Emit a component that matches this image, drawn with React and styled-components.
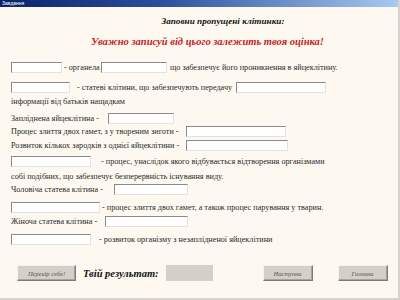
import React from "react";
import styled, { createGlobalStyle } from "styled-components";

const Global = createGlobalStyle`
  html, body { margin: 0; padding: 0; background: #fdf9f0; }
  body { width: 400px; height: 300px; overflow: hidden; }
`;

const Window = styled.div`
  width: 400px;
  height: 300px;
  box-sizing: border-box;
  background: #fdf9f0;
  border-right: 2px solid #d8d4cc;
  border-bottom: 2px solid #d8d4cc;
  display: flex;
  flex-direction: column;
  font-family: "Liberation Serif", "Times New Roman", serif;
  color: #2a2a2a;
`;

const TitleBar = styled.div`
  height: 7px;
  background: linear-gradient(to right, #0a246a 0%, #2a4f9a 40%, #a6caf0 100%);
  color: #fff;
  font-family: "Liberation Sans", Arial, sans-serif;
  font-size: 5px;
  line-height: 7px;
  padding-left: 2px;
  flex: none;
`;

const Body = styled.div`
  display: flex;
  flex-direction: column;
  padding: 0 0 0 11px;
`;

const Heading = styled.div`
  font-weight: bold;
  font-style: italic;
  text-align: center;
  font-size: ${(p) => p.$size}px;
  color: ${(p) => p.$color};
  margin-top: ${(p) => p.$top}px;
  line-height: ${(p) => p.$lh}px;
  padding-left: ${(p) => p.$shift}px;
  white-space: nowrap;
`;

const Row = styled.div`
  display: flex;
  align-items: center;
  height: 12px;
  margin-top: ${(p) => p.$top}px;
  font-size: 8.2px;
  white-space: nowrap;
`;

const Text = styled.span`
  margin-left: ${(p) => p.$ml || 0}px;
`;

const Label = styled.span`
  width: ${(p) => p.$w}px;
  margin-left: ${(p) => p.$ml || 0}px;
  flex: none;
  overflow: visible;
`;

const Field = styled.div`
  box-sizing: border-box;
  height: 11px;
  width: ${(p) => p.$w}px;
  margin-left: ${(p) => p.$ml || 0}px;
  background: #fff;
  border-top: 1px solid #8a8a8a;
  border-left: 1px solid #8a8a8a;
  border-right: 1px solid #e4e2dc;
  border-bottom: 1px solid #e4e2dc;
  flex: none;
`;

const Footer = styled.div`
  display: flex;
  align-items: center;
  margin-top: 20px;
  padding-left: 6px;
  height: 16px;
`;

const Button = styled.div`
  box-sizing: border-box;
  width: ${(p) => p.$w}px;
  height: 16px;
  margin-left: ${(p) => p.$ml || 0}px;
  background: #d4d0c8;
  border-top: 1px solid #f4f2ee;
  border-left: 1px solid #f4f2ee;
  border-right: 1px solid #7e7b76;
  border-bottom: 1px solid #7e7b76;
  box-shadow: inset -1px -1px 0 #a8a49c;
  display: flex;
  align-items: center;
  justify-content: center;
  font-style: italic;
  font-size: 6.5px;
  color: #555;
  flex: none;
`;

const Result = styled.span`
  font-weight: bold;
  font-style: italic;
  font-size: 10.5px;
  margin-left: 7px;
  color: #111;
`;

const ScoreBox = styled.div`
  box-sizing: border-box;
  width: 47px;
  height: 16px;
  margin-left: 7px;
  background: #d4d0c8;
  flex: none;
`;

export default function App() {
  return (
    <>
      <Global />
      <Window>
        <TitleBar>Завдання</TitleBar>
        <Body>
          <Heading $size={9.2} $color="#111" $top={8} $lh={12} $shift={37}>
            Заповни пропущені клітинки:
          </Heading>
          <Heading $size={10.5} $color="#c8201e" $top={8} $lh={14} $shift={6}>
            Уважно записуй від цього залежить твоя оцінка!
          </Heading>
          <Row $top={12}>
            <Field $w={51} />
            <Label $w={37} $ml={2}>- органела</Label>
            <Field $w={66} />
            <Text $ml={3}>що забезпечує його проникнення в яйцеклітину.</Text>
          </Row>
          <Row $top={8}>
            <Field $w={59} />
            <Label $w={159} $ml={7}>- статеві клітини, що забезпечують передачу</Label>
            <Field $w={90} />
          </Row>
          <Row $top={2}>
            <Text>інформації від батьків нащадкам</Text>
          </Row>
          <Row $top={5}>
            <Label $w={97}>Запліднена яйцеклітина -</Label>
            <Field $w={66} />
          </Row>
          <Row $top={1}>
            <Label $w={175}>Процес злиття двох гамет, з у твореним зиготи -</Label>
            <Field $w={100} />
          </Row>
          <Row $top={2}>
            <Label $w={175}>Розвиток кількох зародків з однієї яйцеклітини -</Label>
            <Field $w={102} />
          </Row>
          <Row $top={4}>
            <Field $w={80} />
            <Text $ml={10}>- процес, унаслідок якого відбувається відтворення організмами</Text>
          </Row>
          <Row $top={3}>
            <Text>собі подібних, що забезпечує безперервність існування виду.</Text>
          </Row>
          <Row $top={1}>
            <Label $w={103}>Чоловіча статева клітина -</Label>
            <Field $w={74} />
          </Row>
          <Row $top={6}>
            <Field $w={89} />
            <Text $ml={2}>- процес злиття двох гамет, а також процес парування у тварин.</Text>
          </Row>
          <Row $top={2}>
            <Label $w={94}>Жіноча статева клітина -</Label>
            <Field $w={83} />
          </Row>
          <Row $top={6}>
            <Field $w={80} />
            <Text $ml={8}>- розвиток організму з незаплідненої яйцеклітини</Text>
          </Row>
          <Footer>
            <Button $w={59}>Перевір себе!</Button>
            <Result>Твій результат:</Result>
            <ScoreBox />
            <Button $w={50} $ml={50}>Наступна</Button>
            <Button $w={50} $ml={25}>Головна</Button>
          </Footer>
        </Body>
      </Window>
    </>
  );
}
